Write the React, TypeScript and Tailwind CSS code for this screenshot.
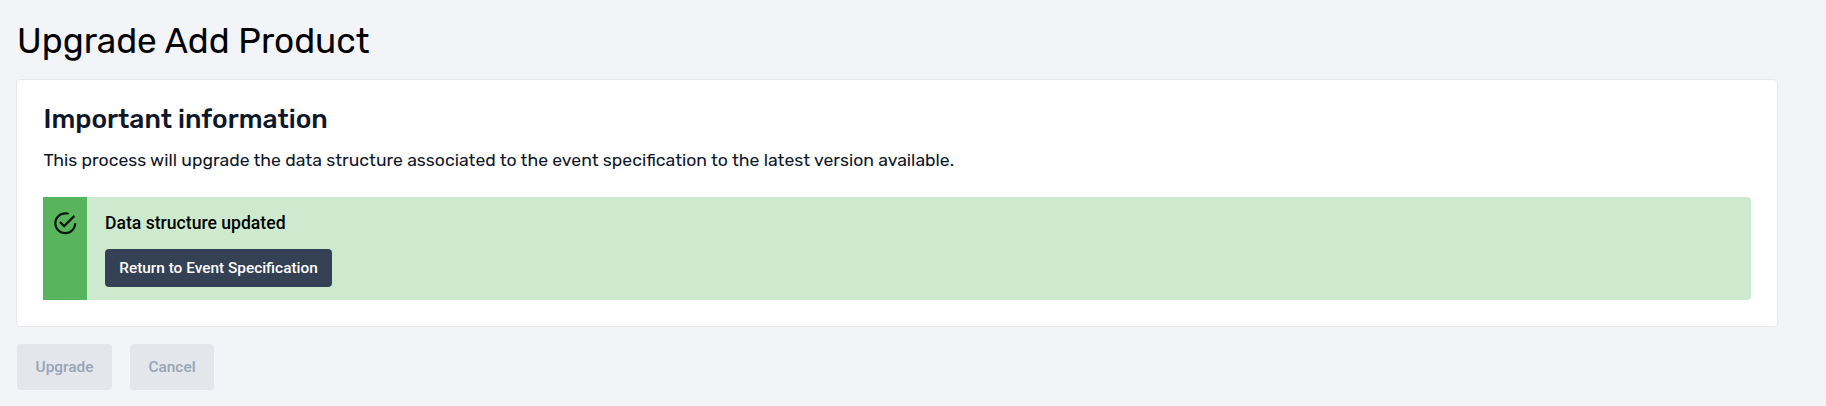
export default function App() {
  return (
    <main className="h-[406px] w-full bg-[#f2f4f8] pl-[17px] pr-[49px] pt-[20px] font-['Roboto',sans-serif] text-black overflow-hidden">
      <h1 className="h-[60px] text-[35.2px] leading-[42px] font-['Rubik','Roboto',sans-serif] whitespace-nowrap">Upgrade Add Product</h1>
      <section className="h-[246px] rounded-[4px] bg-white px-[26px] pt-[22px] text-[#0f172a] shadow-[0_0_0_1px_#e6e8eb]">
        <h2 className="h-[42px] pl-[0.5px] text-[26.4px] leading-[34px] font-medium font-['Rubik','Roboto',sans-serif] whitespace-nowrap">Important information</h2>
        <p className="h-[53px] pl-[0.5px] text-[17.6px] leading-[32px] font-['Rubik','Roboto',sans-serif] whitespace-nowrap">This process will upgrade the data structure associated to the event specification to the latest version available.</p>
        <div className="flex h-[103px] overflow-hidden rounded-r-[4px] bg-[#cdeace] text-black">
          <div className="flex w-[44px] justify-center bg-[#59b55d] pt-[13px]">
            <svg className="size-[26.5px] text-black/87" viewBox="0 0 24 24" fill="currentColor"><path d="M20,12A8,8 0 0,1 12,20A8,8 0 0,1 4,12A8,8 0 0,1 12,4C12.76,4 13.5,4.11 14.2,4.31L15.77,2.74C14.61,2.26 13.34,2 12,2A10,10 0 0,0 2,12A10,10 0 0,0 12,22A10,10 0 0,0 22,12M7.91,10.08L6.5,11.5L11,16L21,6L19.59,4.58L11,13.17L7.91,10.08Z" /></svg>
          </div>
          <div className="pl-[18px] pt-[13px]">
            <p className="h-[39px] text-[17.6px] leading-[26px] font-medium">Data structure updated</p>
            <button className="h-[38px] w-[227px] rounded-[4px] bg-[#344054] text-[15.4px] leading-[24px] font-medium text-white">Return to Event Specification</button>
          </div>
        </div>
      </section>
      <div className="mt-[18px] flex gap-[18px]">
        <button className="h-[46px] w-[95px] rounded-[4px] bg-[#e3e6eb] text-[15.4px] leading-[24px] font-medium text-[#98a4b7]">Upgrade</button>
        <button className="h-[46px] w-[84px] rounded-[4px] bg-[#e3e6eb] text-[15.4px] leading-[24px] font-medium text-[#98a4b7]">Cancel</button>
      </div>
    </main>
  );
}
